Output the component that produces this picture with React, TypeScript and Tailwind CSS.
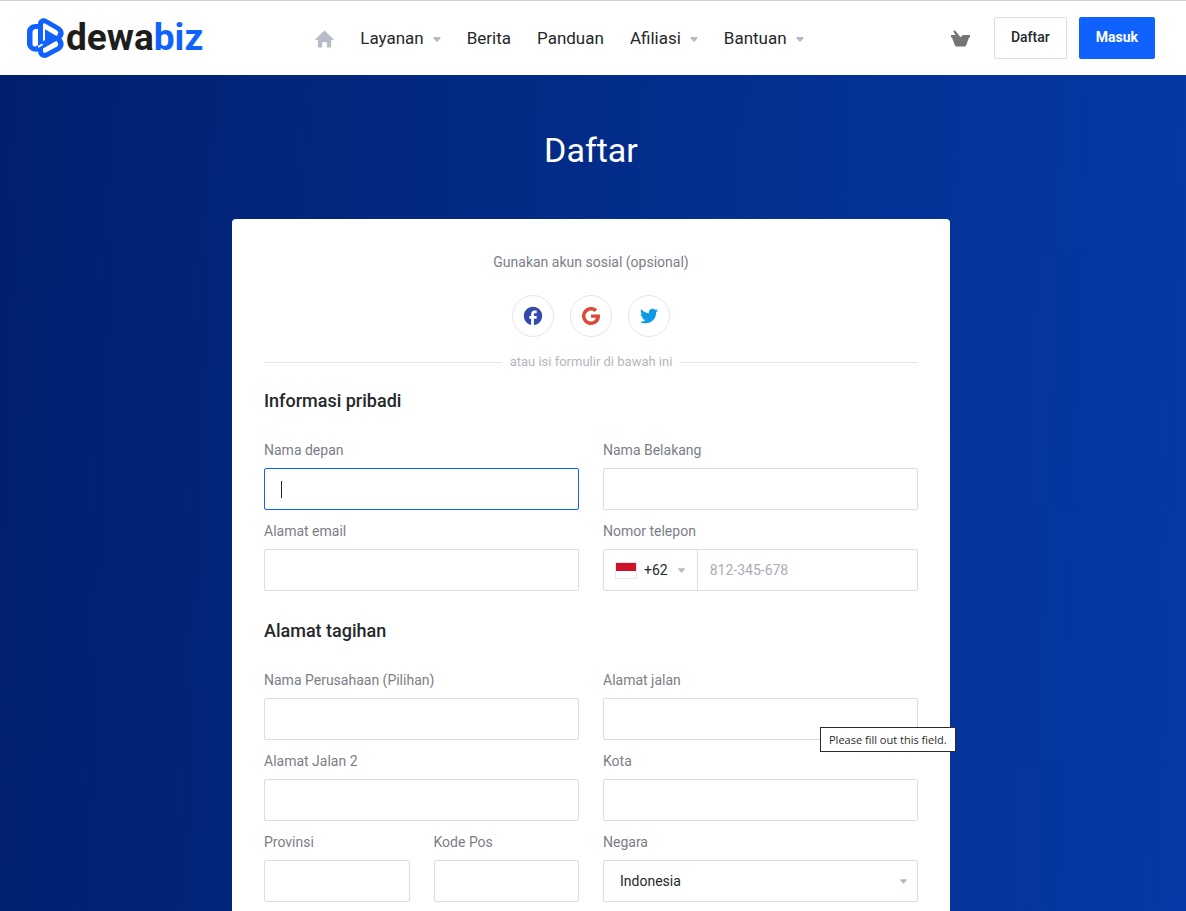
import { useId } from "react";
import type { ReactNode } from "react";
import { MdFacebook } from "react-icons/md";
import { FaTwitter } from "react-icons/fa";

const inputClass =
  "block w-full h-[42px] px-4 text-sm text-[#25282b] bg-white border border-[#dbdde0] rounded-xs outline-none focus:border-[#0f62fe] placeholder:text-[#a9adb8]";

const navItems = [
  { label: "Layanan", dropdown: true },
  { label: "Berita", dropdown: false },
  { label: "Panduan", dropdown: false },
  { label: "Afiliasi", dropdown: true },
  { label: "Bantuan", dropdown: true },
];

function Caret({ className = "" }: { className?: string }) {
  return (
    <svg viewBox="0 0 8 5" className={`h-[5px] text-[#b4b9c3] ${className}`} fill="currentColor" aria-hidden="true">
      <path d="M1.2 0h5.6c.8 0 1.2.7.7 1.3L4.700 4.600c-.4.5-1 .5-1.400 0L.5 1.300C0 .7.4 0 1.200 0z" />
    </svg>
  );
}

function Logo() {
  return (
    <a href="#" className="flex items-center gap-0.5" aria-label="dewabiz">
      <svg viewBox="0 0 37 40" className="w-[37px] h-10" aria-hidden="true">
        <path
          fill="#0f62fe"
          d="M11 6C11 1.500 15.500-1 19.500 1L32.500 8.500C36.500 11 37.500 15 36 18L34.500 20.500L36 23C37.500 27 36 30.500 33 32.500L20.500 39.300C16 41.300 11.500 38.500 11 33.500L9 33.700C4 33.700 0 30 0 25.500V14C0 9.500 4 6 8.500 6Z"
        />
        <g fill="#fff">
          <path d="M11 11H9Q5.500 11 5.500 14.500V26Q5.500 29 8.500 28.500L11 27.300Z" />
          <path d="M16 6.500Q16 4.500 18 5.500L30 12.500Q32 14 31 16L29.500 18L18 11.300V22L16 23.200Z" />
          <path d="M11 28L14.500 25.800L16.500 26.800L11 30Z" />
          <path d="M16 30.500L29.500 22.800L31 25.500Q31.700 27.500 30 28.500L18.500 34.800Q16.500 35.500 16 33.500Z" />
        </g>
      </svg>
      <span className="text-[37px] leading-10 font-bold text-[#1d1d1b]">
        dewa<span className="text-[#0f62fe]">biz</span>
      </span>
    </a>
  );
}

function Header() {
  return (
    <header className="flex items-center h-[75px] pl-[27px] pr-[31px] bg-white border-t border-[#d0d0d0]">
      <Logo />
      <nav className="flex flex-1 items-center gap-[26px] ml-28 pt-0.5 text-[17px] text-[#25282b]">
        <a href="#" aria-label="Beranda">
          <svg viewBox="0 0 20 18" className="w-[19px] h-[18px]" fill="#b7bcc6" aria-hidden="true">
            <path d="M10 0l9.600 9.200c.4.400.2.800-.3.800H17v7c0 .600-.4 1-1 1h-3.500v-5.500h-5V18H4c-.6 0-1-.4-1-1v-7H.7c-.5 0-.7-.4-.3-.8z" />
          </svg>
        </a>
        {navItems.map((item) => (
          <a key={item.label} href="#" className="flex items-center gap-[9px]">
            {item.label}
            {item.dropdown && <Caret className="w-2" />}
          </a>
        ))}
      </nav>
      <div className="flex items-center gap-3">
        <a href="#" aria-label="Keranjang" className="mr-3">
          <svg viewBox="0 0 19 17" className="w-[19px] h-[17px]" fill="#757575" aria-hidden="true">
            <path d="M0 5h4.700L2.200 1.600 4 .300 9.600 7.200 11.800 5H19v2.500h-1L15.300 15c-.3.900-.8 1.500-1.700 1.500H5.400c-.9 0-1.400-.6-1.700-1.500L1 7.500H0z" />
          </svg>
        </a>
        <button type="button" className="h-[42px] px-4 pb-0.5 text-sm font-medium text-[#25282b] border border-[#dbdde0] rounded-xs">
          Daftar
        </button>
        <button type="button" className="h-[42px] px-[17px] pb-0.5 text-sm font-bold text-white bg-[#0f62fe] rounded-xs">
          Masuk
        </button>
      </div>
    </header>
  );
}

function SocialButton({ label, children }: { label: string; children: ReactNode }) {
  return (
    <button type="button" aria-label={label} className="flex items-center justify-center size-[42px] border border-[#e4e5ea] rounded-full">
      {children}
    </button>
  );
}

function Field({ label, autoFocus }: { label: string; autoFocus?: boolean }) {
  const id = useId();
  return (
    <div>
      <label htmlFor={id} className="block mb-2 text-sm text-[#7b7e87]">
        {label}
      </label>
      <div className="relative">
        <input id={id} type="text" placeholder=" " autoFocus={autoFocus} className={`peer ${inputClass}`} />
        {autoFocus && (
          <span className="hidden peer-placeholder-shown:block absolute left-[17px] top-[13px] w-px h-[17px] bg-[#25282b] pointer-events-none" />
        )}
      </div>
    </div>
  );
}

function PhoneField() {
  return (
    <div>
      <label htmlFor="phone" className="block mb-2 text-sm text-[#7b7e87]">
        Nomor telepon
      </label>
      <div className="flex h-[42px] bg-white border border-[#dbdde0] rounded-xs">
        <button type="button" className="flex items-center px-3 text-sm text-[#25282b] border-r border-[#dbdde0]" aria-label="Indonesia +62">
          <span className="flex flex-col w-5 h-[15px] mr-2 outline outline-[#e9e9ec]">
            <span className="h-2 bg-[#ce1126]" />
          </span>
          +62
          <Caret className="ml-[10px] w-[7px]" />
        </button>
        <input id="phone" type="tel" placeholder="812-345-678" className="flex-1 min-w-0 px-3 text-sm outline-none placeholder:text-[#a9adb8]" />
      </div>
    </div>
  );
}

function StreetField() {
  return (
    <div className="relative">
      <Field label="Alamat jalan" />
      <div role="tooltip" className="absolute top-[57px] left-[217px] px-2 py-1 font-['Open_Sans',sans-serif] text-[11px] leading-[15px] text-[#2b2b2b] whitespace-nowrap bg-white border border-[#2b2b2b]">
        Please fill out this field.
      </div>
    </div>
  );
}

function CountryField() {
  return (
    <div>
      <label htmlFor="country" className="block mb-2 text-sm text-[#7b7e87]">
        Negara
      </label>
      <div className="relative">
        <select id="country" className={`${inputClass} appearance-none`}>
          <option>Indonesia</option>
        </select>
        <Caret className="absolute right-[11px] top-[19px] w-[7px] pointer-events-none" />
      </div>
    </div>
  );
}

export default function App() {
  return (
    <div className="flex flex-col min-h-screen font-[Roboto,sans-serif]">
      <Header />
      <main className="flex-1 pr-1 bg-linear-[92deg,#00206e,#0639a5]">
        <h1 className="pt-[50px] text-[34px] leading-[50px] text-center text-white">Daftar</h1>
        <form className="w-full max-w-[718px] mx-auto mt-11 px-8 pt-8 pb-8 bg-white rounded">
          <p className="text-sm leading-[22px] text-center text-[#7b7e87]">Gunakan akun sosial (opsional)</p>
          <div className="flex justify-center gap-4 mt-[22px]">
            <SocialButton label="Facebook">
              <MdFacebook className="size-[22px] text-[#3349ad]" />
            </SocialButton>
            <SocialButton label="Google">
              <svg viewBox="0 0 18 18" className="size-[18px]" fill="#dc4a38" aria-hidden="true">
                <path d="M9 7.400v3.400h5c-.6 2.300-2.500 3.700-5 3.700A5.500 5.500 0 1 1 12.600 4.900l2.500-2.500A9 9 0 1 0 9 18c5 0 9-3.500 9-9 0-.5-.1-1.100-.2-1.600z" />
              </svg>
            </SocialButton>
            <SocialButton label="Twitter">
              <FaTwitter className="size-[18px] text-[#0d9be3]" />
            </SocialButton>
          </div>
          <div className="flex items-center gap-2 mt-4 text-[13px] leading-[18px] text-[#b4b6bb]">
            <span className="flex-1 h-px bg-[#e5e5e7]" />
            atau isi formulir di bawah ini
            <span className="flex-1 h-px bg-[#e5e5e7]" />
          </div>

          <h2 className="mt-4 text-lg font-medium text-[#25282b]">Informasi pribadi</h2>
          <div className="grid grid-cols-2 gap-x-6 gap-y-[11px] mt-[25px]">
            <Field label="Nama depan" autoFocus />
            <Field label="Nama Belakang" />
            <Field label="Alamat email" />
            <PhoneField />
          </div>

          <h2 className="mt-[26px] text-lg font-medium text-[#25282b]">Alamat tagihan</h2>
          <div className="grid grid-cols-2 gap-x-6 gap-y-[11px] mt-[25px]">
            <Field label="Nama Perusahaan (Pilihan)" />
            <StreetField />
            <Field label="Alamat Jalan 2" />
            <Field label="Kota" />
            <div className="grid grid-cols-2 gap-6">
              <Field label="Provinsi" />
              <Field label="Kode Pos" />
            </div>
            <CountryField />
          </div>
        </form>
      </main>
    </div>
  );
}
